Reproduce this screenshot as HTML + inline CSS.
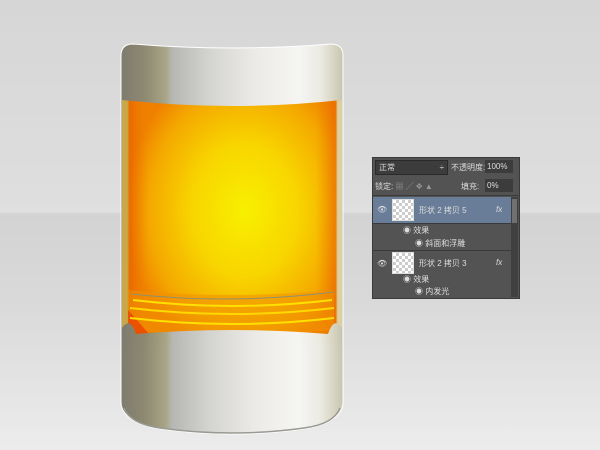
<!DOCTYPE html>
<html><head><meta charset="utf-8"><style>
html,body{margin:0;padding:0;width:600px;height:450px;overflow:hidden}
body{background:linear-gradient(#d6d6d6 0,#dedede 200px,#e0e0e0 212px,#d3d3d3 214px,#d9d9d9 300px,#ececec 450px);position:relative;font-family:"Liberation Sans","Noto Sans CJK SC",sans-serif}
.p{position:absolute;left:372px;top:157px;width:146px;height:140px;background:#535353;border:1px solid #3a3a3a;font-size:8px;color:#ddd}
.p div{position:absolute}
.ck{background:repeating-conic-gradient(#ccc 0 25%,#fff 0 50%) 0 0/6px 6px;border:1px solid #ddd}
</style></head><body>
<svg width="600" height="450" style="position:absolute;left:0;top:0">
<defs>
<linearGradient id="m" x1="0" x2="1">
<stop offset="0" stop-color="#7e7b70"/><stop offset=".1" stop-color="#8c8870"/><stop offset=".2" stop-color="#a8a486"/><stop offset=".23" stop-color="#b6b7b2"/><stop offset=".4" stop-color="#d4d4d0"/><stop offset=".6" stop-color="#eceae6"/><stop offset=".8" stop-color="#f5f5f3"/><stop offset=".9" stop-color="#ebeae2"/><stop offset=".97" stop-color="#d3d0bc"/><stop offset="1" stop-color="#c6c3b0"/>
</linearGradient>
<radialGradient id="l" cx="245" cy="210" r="150" gradientUnits="userSpaceOnUse" gradientTransform="translate(245 210) scale(0.8 1) translate(-245 -210)">
<stop offset="0" stop-color="#f8f000"/><stop offset=".45" stop-color="#f8d400"/><stop offset=".8" stop-color="#f4a800"/><stop offset="1" stop-color="#f08000"/>
</radialGradient>
<linearGradient id="s" x1="0" x2="1">
<stop offset="0" stop-color="#c8a848"/><stop offset=".025" stop-color="#c8a848"/><stop offset=".035" stop-color="#e86000" stop-opacity=".7"/><stop offset=".12" stop-color="#f08000" stop-opacity="0"/><stop offset=".88" stop-color="#f08000" stop-opacity="0"/><stop offset=".97" stop-color="#e86a00" stop-opacity=".7"/><stop offset=".98" stop-color="#ddd0a0"/><stop offset="1" stop-color="#ddd0a0"/>
</linearGradient>
</defs>
<path d="M121 56 Q121 44 133 44 Q232 52 331 44 Q343 44 343 56 L343 402 Q343 420 310 428 Q232 440 154 428 Q121 420 121 402 Z" fill="url(#m)" stroke="#fff" stroke-width="1"/>
<path d="M124 408 Q130 424 160 428 Q232 438 304 428 Q334 424 340 408" fill="none" stroke="#9a9a94" stroke-width="1.5"/>
<path d="M122 100 Q232 112 342 100 L342 340 L122 340 Z" fill="url(#l)"/>
<path d="M122 100 Q232 112 342 100 L342 340 L122 340 Z" fill="url(#s)"/>
<path d="M128 290 Q232 300 334 290 L334 330 Q232 340 128 330 Z" fill="#f09000" opacity=".55"/>
<path d="M128 310 L128 335 L150 335 Z" fill="#e83000" opacity=".6"/>
<path d="M131 294 Q232 305 334 292" stroke="#909070" fill="none" stroke-width="1"/>
<path d="M133 300 Q232 312 332 300" stroke="#ffe000" fill="none" stroke-width="2"/>
<path d="M130 308 Q232 320 334 308" stroke="#ffd800" fill="none" stroke-width="2"/>
<path d="M130 318 Q232 330 334 318" stroke="#ffe000" fill="none" stroke-width="2"/>
<path d="M122 328 Q130 316 136 334 Q232 326 328 334 Q334 316 342 328 L342 345 L122 345 Z" fill="url(#m)"/>
</svg>
<div class="p">
<div style="left:2px;top:2px;width:68px;height:13px;background:#3c3c3c;border:1px solid #2a2a2a;line-height:13px;padding-left:3px">正常<span style="position:absolute;right:3px">÷</span></div>
<div style="left:78px;top:3px;line-height:13px">不透明度:</div>
<div style="left:112px;top:2px;width:26px;height:13px;background:#3c3c3c;line-height:13px;padding-left:2px">100%</div>
<div style="left:2px;top:22px;line-height:13px">锁定: <span style="color:#999">▦ ╱ ✥ ▲</span></div>
<div style="left:88px;top:22px;line-height:13px">填充:</div>
<div style="left:112px;top:21px;width:26px;height:13px;background:#3c3c3c;line-height:13px;padding-left:2px">0%</div>
<div style="left:0;top:37px;width:146px;height:1px;background:#3a3a3a"></div>
<div style="left:0;top:39px;width:138px;height:26px;background:#6a7d98"></div>
<div style="left:4px;top:47px">👁︎</div>
<div class="ck" style="left:19px;top:41px;width:20px;height:20px"></div>
<div style="left:46px;top:47px">形状 2 拷贝 5</div>
<div style="left:123px;top:47px;font-style:italic">fx</div>
<div style="left:138px;top:39px;width:7px;height:100px;background:#404040"></div>
<div style="left:139px;top:41px;width:5px;height:24px;background:#707070"></div>
<div style="left:0;top:65px;width:138px;height:1px;background:#3a3a3a"></div>
<div style="left:30px;top:67px">◉ 效果</div>
<div style="left:42px;top:80px">◉ 斜面和浮雕</div>
<div style="left:0;top:92px;width:138px;height:1px;background:#3a3a3a"></div>
<div style="left:4px;top:101px">👁︎</div>
<div class="ck" style="left:19px;top:94px;width:20px;height:20px"></div>
<div style="left:46px;top:100px">形状 2 拷贝 3</div>
<div style="left:123px;top:100px;font-style:italic">fx</div>
<div style="left:30px;top:116px">◉ 效果</div>
<div style="left:42px;top:128px">◉ 内发光</div>
</div>
</body></html>
